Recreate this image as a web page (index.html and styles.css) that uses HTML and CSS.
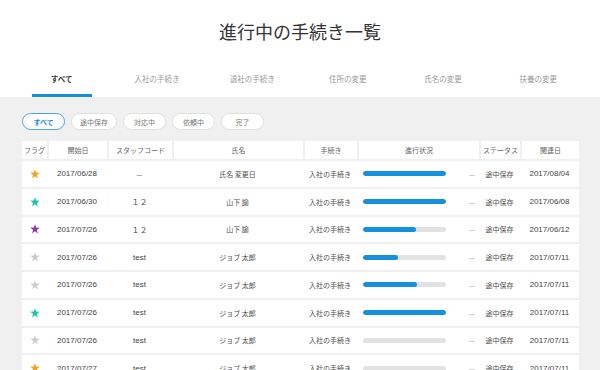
FILE: index.html
```html
<!DOCTYPE html>
<html lang="ja">
<head>
    <meta charset="UTF-8">
    <meta name="viewport" content="width=device-width, initial-scale=1.0">
    <title>進行中の手続き一覧</title>
    <link rel="stylesheet" href="styles.css">
</head>
<body>

    <header class="page_head">
        <h1 class="title">進行中の手続き一覧</h1>
        <nav class="tabs">
            <a class="tab active"><span>すべて</span></a>
            <a class="tab"><span>入社の手続き</span></a>
            <a class="tab"><span>退社の手続き</span></a>
            <a class="tab"><span>住所の変更</span></a>
            <a class="tab"><span>氏名の変更</span></a>
            <a class="tab"><span>扶養の変更</span></a>
        </nav>
    </header>

    <main class="content">
        <div class="filters">
            <button class="pill active">すべて</button>
            <button class="pill">途中保存</button>
            <button class="pill">対応中</button>
            <button class="pill">依頼中</button>
            <button class="pill">完了</button>
        </div>

        <table class="list">
            <colgroup>
                <col style="width:25px">
                <col style="width:60px">
                <col style="width:65px">
                <col style="width:131px">
                <col style="width:54px">
                <col style="width:122px">
                <col style="width:41px">
                <col style="width:59px">
            </colgroup>
            <thead>
                <tr>
                    <th>フラグ</th>
                    <th>開始日</th>
                    <th>スタッフコード</th>
                    <th>氏名</th>
                    <th>手続き</th>
                    <th>進行状況</th>
                    <th>ステータス</th>
                    <th>関連日</th>
                </tr>
            </thead>
            <tbody>
                <tr>
                    <td><svg class="star orange" viewBox="0 0 10 10"><polygon points="5,0.3 6.2,3.6 9.7,3.7 6.9,5.9 7.9,9.4 5,7.3 2.1,9.4 3.1,5.9 0.3,3.7 3.8,3.6"/></svg></td>
                    <td class="num">2017/06/28</td>
                    <td class="dash">—</td>
                    <td>氏名 変更日</td>
                    <td>入社の手続き</td>
                    <td><div class="progress"><div class="bar"><span style="width:100%"></span></div><span class="dash">—</span></div></td>
                    <td>途中保存</td>
                    <td class="num">2017/08/04</td>
                </tr>
                <tr>
                    <td><svg class="star teal" viewBox="0 0 10 10"><polygon points="5,0.3 6.2,3.6 9.7,3.7 6.9,5.9 7.9,9.4 5,7.3 2.1,9.4 3.1,5.9 0.3,3.7 3.8,3.6"/></svg></td>
                    <td class="num">2017/06/30</td>
                    <td class="wide">１２</td>
                    <td>山下 諭</td>
                    <td>入社の手続き</td>
                    <td><div class="progress"><div class="bar"><span style="width:100%"></span></div><span class="dash">—</span></div></td>
                    <td>途中保存</td>
                    <td class="num">2017/06/08</td>
                </tr>
                <tr>
                    <td><svg class="star purple" viewBox="0 0 10 10"><polygon points="5,0.3 6.2,3.6 9.7,3.7 6.9,5.9 7.9,9.4 5,7.3 2.1,9.4 3.1,5.9 0.3,3.7 3.8,3.6"/></svg></td>
                    <td class="num">2017/07/26</td>
                    <td class="wide">１２</td>
                    <td>山下 諭</td>
                    <td>入社の手続き</td>
                    <td><div class="progress"><div class="bar"><span style="width:64%"></span></div><span class="dash">—</span></div></td>
                    <td>途中保存</td>
                    <td class="num">2017/06/12</td>
                </tr>
                <tr>
                    <td><svg class="star gray" viewBox="0 0 10 10"><polygon points="5,0.3 6.2,3.6 9.7,3.7 6.9,5.9 7.9,9.4 5,7.3 2.1,9.4 3.1,5.9 0.3,3.7 3.8,3.6"/></svg></td>
                    <td class="num">2017/07/26</td>
                    <td class="num">test</td>
                    <td>ジョブ 太郎</td>
                    <td>入社の手続き</td>
                    <td><div class="progress"><div class="bar"><span style="width:42%"></span></div><span class="dash">—</span></div></td>
                    <td>途中保存</td>
                    <td class="num">2017/07/11</td>
                </tr>
                <tr>
                    <td><svg class="star gray" viewBox="0 0 10 10"><polygon points="5,0.3 6.2,3.6 9.7,3.7 6.9,5.9 7.9,9.4 5,7.3 2.1,9.4 3.1,5.9 0.3,3.7 3.8,3.6"/></svg></td>
                    <td class="num">2017/07/26</td>
                    <td class="num">test</td>
                    <td>ジョブ 太郎</td>
                    <td>入社の手続き</td>
                    <td><div class="progress"><div class="bar"><span style="width:65%"></span></div><span class="dash">—</span></div></td>
                    <td>途中保存</td>
                    <td class="num">2017/07/11</td>
                </tr>
                <tr>
                    <td><svg class="star teal" viewBox="0 0 10 10"><polygon points="5,0.3 6.2,3.6 9.7,3.7 6.9,5.9 7.9,9.4 5,7.3 2.1,9.4 3.1,5.9 0.3,3.7 3.8,3.6"/></svg></td>
                    <td class="num">2017/07/26</td>
                    <td class="num">test</td>
                    <td>ジョブ 太郎</td>
                    <td>入社の手続き</td>
                    <td><div class="progress"><div class="bar"><span style="width:100%"></span></div><span class="dash">—</span></div></td>
                    <td>途中保存</td>
                    <td class="num">2017/07/11</td>
                </tr>
                <tr>
                    <td><svg class="star gray" viewBox="0 0 10 10"><polygon points="5,0.3 6.2,3.6 9.7,3.7 6.9,5.9 7.9,9.4 5,7.3 2.1,9.4 3.1,5.9 0.3,3.7 3.8,3.6"/></svg></td>
                    <td class="num">2017/07/26</td>
                    <td class="num">test</td>
                    <td>ジョブ 太郎</td>
                    <td>入社の手続き</td>
                    <td><div class="progress"><div class="bar"><span style="width:0%"></span></div><span class="dash">—</span></div></td>
                    <td>途中保存</td>
                    <td class="num">2017/07/11</td>
                </tr>
                <tr>
                    <td><svg class="star orange" viewBox="0 0 10 10"><polygon points="5,0.3 6.2,3.6 9.7,3.7 6.9,5.9 7.9,9.4 5,7.3 2.1,9.4 3.1,5.9 0.3,3.7 3.8,3.6"/></svg></td>
                    <td class="num">2017/07/27</td>
                    <td class="num">test</td>
                    <td>ジョブ 太郎</td>
                    <td>入社の手続き</td>
                    <td><div class="progress"><div class="bar"><span style="width:0%"></span></div><span class="dash">—</span></div></td>
                    <td>途中保存</td>
                    <td class="num">2017/07/11</td>
                </tr>
            </tbody>
        </table>
    </main>

</body>
</html>
```

FILE: styles.css
```css
body {
    margin: 0;
    overflow: hidden;
    font-family: "Noto Sans CJK JP", sans-serif;
    background-color: #f0f0f0;
    color: #444;
}

.page_head {
    background-color: #fff;
}

.title {
    margin: 0;
    height: 62px;
    line-height: 62px;
    text-align: center;
    font-size: 18px;
    font-weight: normal;
    color: #333;
}

.tabs {
    display: flex;
    padding: 0 14px;
}

.tab {
    flex: 1;
    text-align: center;
    font-size: 7.5px;
    color: #999;
    padding-top: 2px;
}

.tab>span {
    display: inline-block;
    width: 60px;
    line-height: 30px;
    border-bottom: 3px solid transparent;
}

.tab.active>span {
    color: #333;
    font-weight: bold;
    border-bottom-color: #1590dc;
}

.content {
    padding: 16px 21px 0 22px;
}

.filters {
    display: flex;
    gap: 6px;
    margin-bottom: 11px;
}

.pill {
    box-sizing: border-box;
    min-width: 43px;
    height: 17px;
    padding: 0 8px;
    border: 1px solid #e0e0e0;
    border-radius: 9px;
    background-color: #fff;
    font-family: inherit;
    font-size: 7px;
    color: #777;
}

.pill.active {
    border: 1.5px solid #4aa6e2;
    color: #1a8ad6;
    font-weight: bold;
}

.list {
    width: 557px;
    table-layout: fixed;
    border-collapse: separate;
    border-spacing: 0;
    background-color: #fff;
}

.list th {
    height: 18px;
    padding: 0;
    font-size: 7px;
    font-weight: normal;
    color: #666;
    border-left: 2px solid #efefef;
    border-bottom: 2px solid #efefef;
}

.list th:first-child {
    border-left: 0;
}

.list td {
    height: 25.75px;
    padding: 0;
    text-align: center;
    font-size: 7px;
    color: #505050;
    border-bottom: 2px solid #efefef;
}

.list td.num {
    font-family: "Liberation Sans", "Noto Sans CJK JP", sans-serif;
    font-size: 8px;
    color: #444;
}

.list td.wide {
    font-size: 8px;
}

.dash {
    color: #999;
}

.star {
    display: block;
    width: 10px;
    height: 10px;
    margin: 0 auto;
}

.orange { fill: #f7a21b; }
.teal { fill: #17c8a4; }
.purple { fill: #8f3bb8; }
.gray { fill: #cdcdcd; }

.progress {
    display: flex;
    align-items: center;
    justify-content: space-between;
    padding: 0 4px 0 6px;
}

.bar {
    width: 83px;
    height: 5px;
    border-radius: 3px;
    background-color: #e2e2e2;
    overflow: hidden;
}

.bar>span {
    display: block;
    height: 100%;
    border-radius: 3px;
    background-color: #1590dc;
}
```
